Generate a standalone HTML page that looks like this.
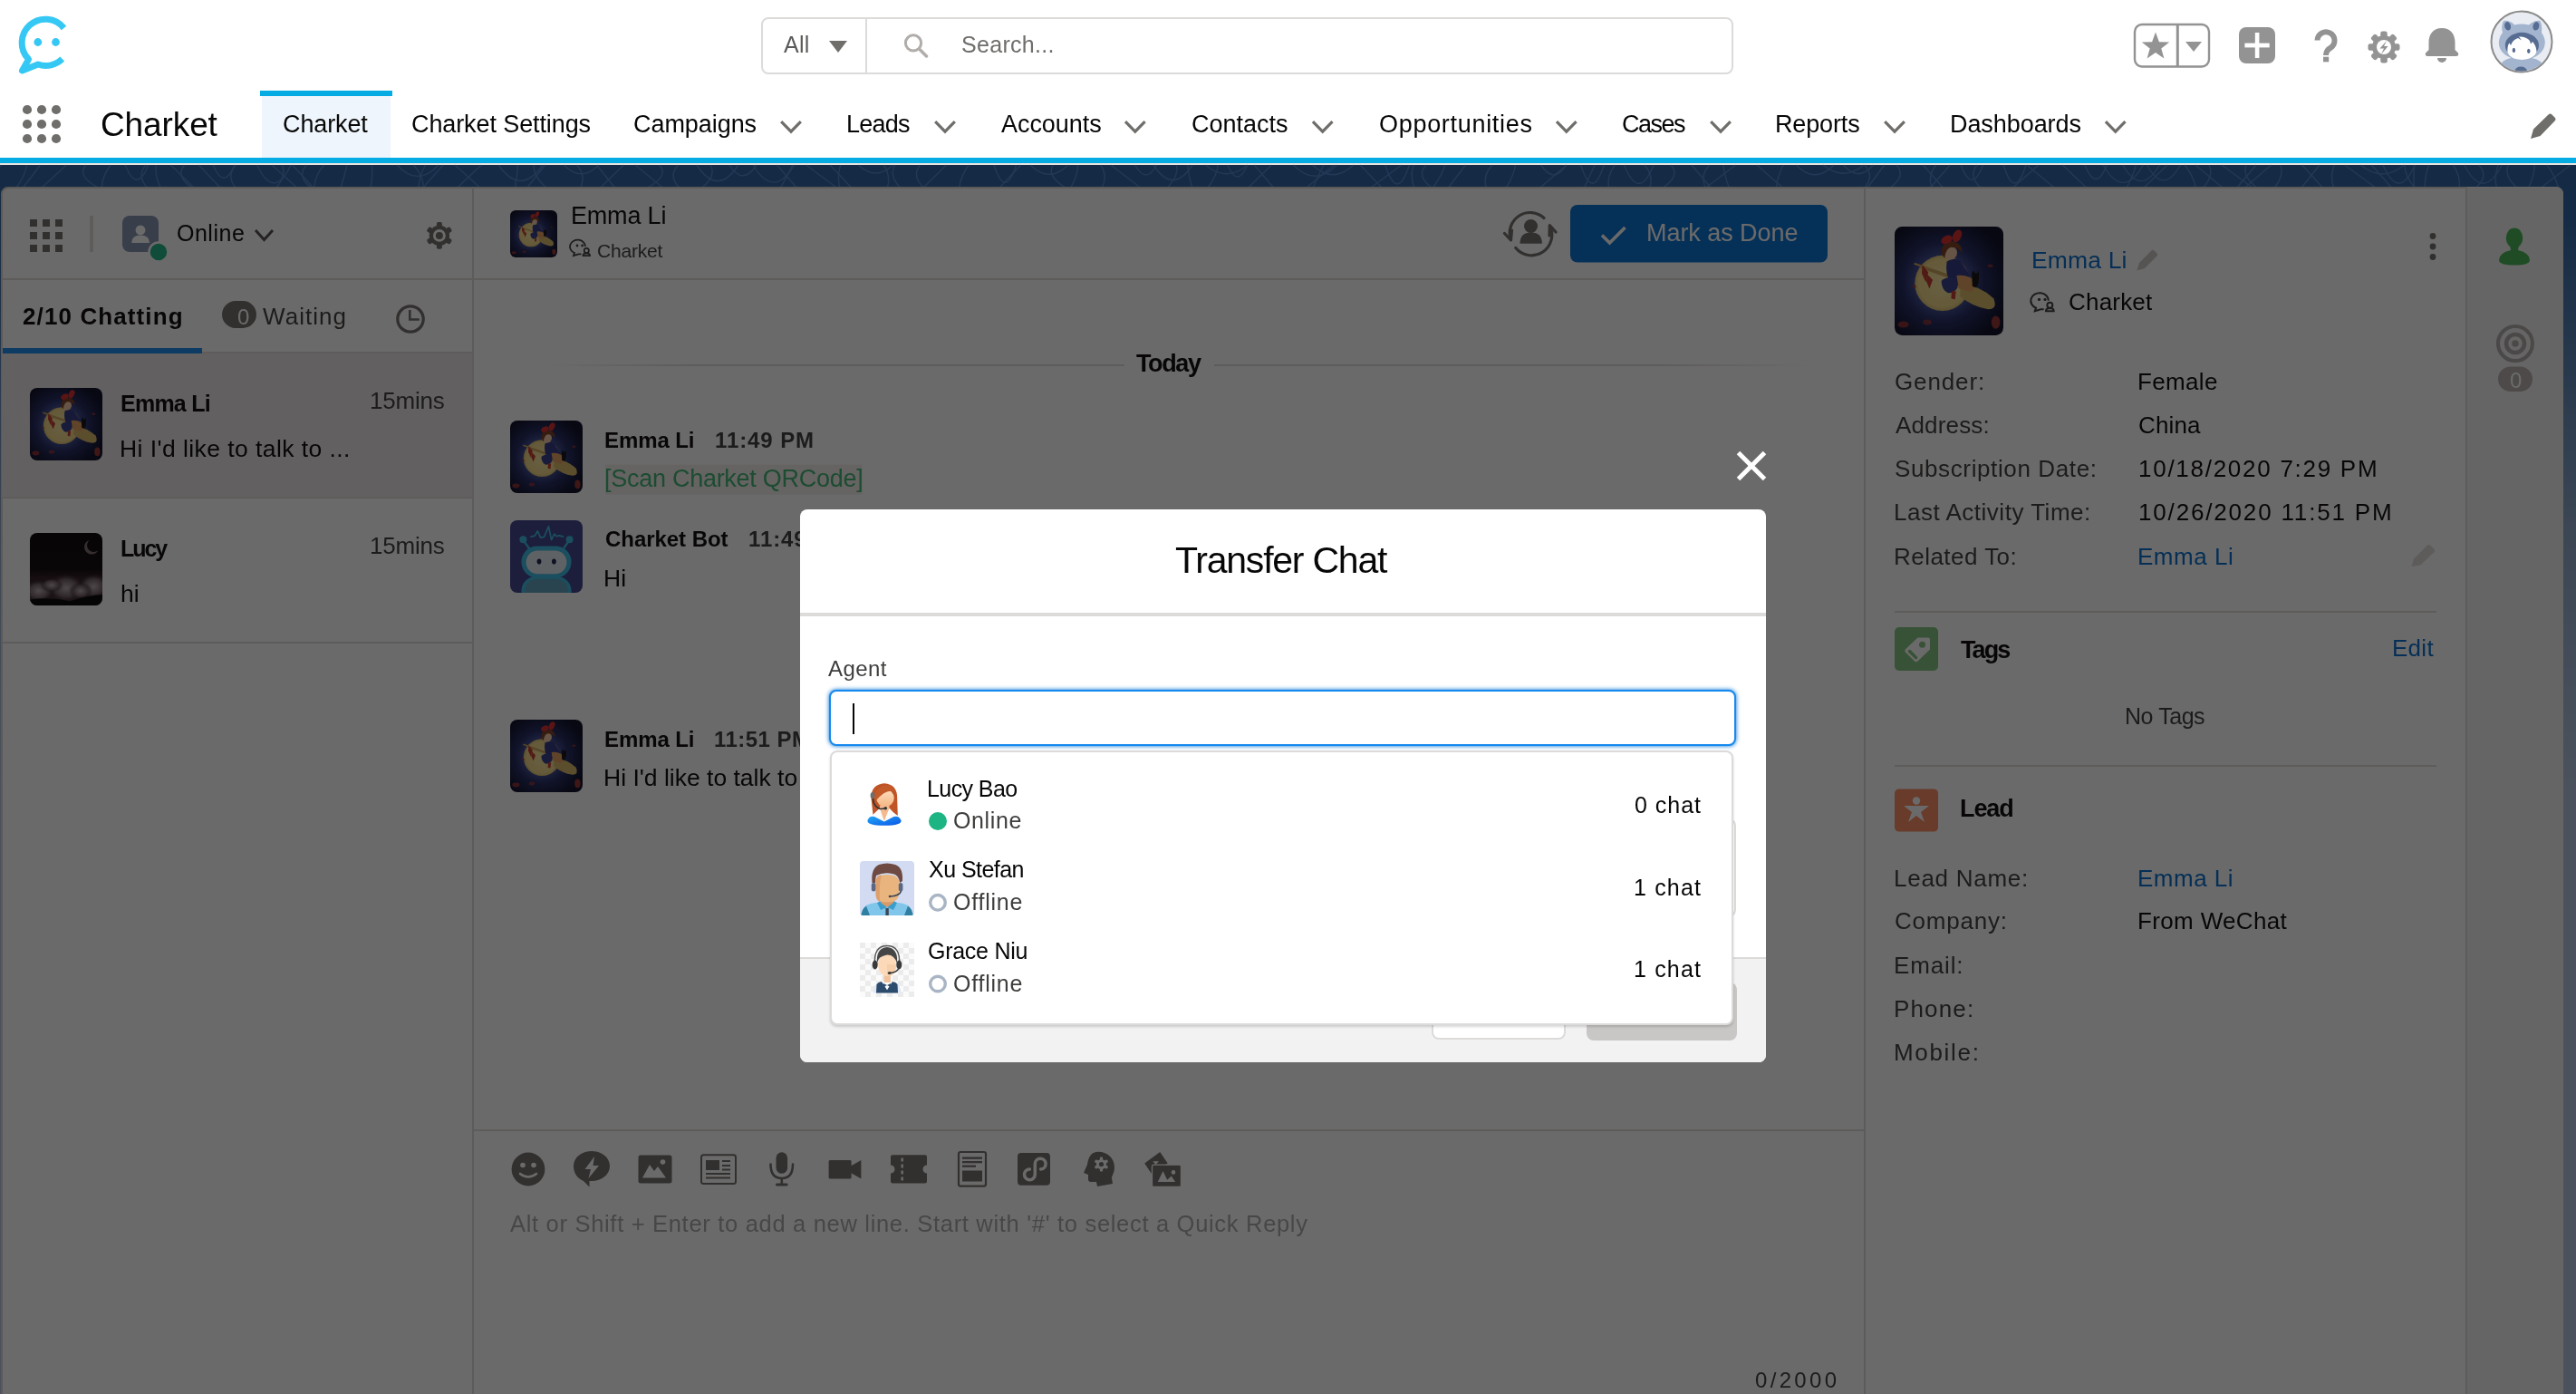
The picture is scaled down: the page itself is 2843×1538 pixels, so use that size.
<!DOCTYPE html>
<html><head><meta charset="utf-8"><title>Charket</title><style>
*{margin:0;padding:0;box-sizing:border-box}
html,body{width:2843px;height:1538px;overflow:hidden;background:#fff;font-family:"Liberation Sans",sans-serif}
.t{position:absolute;white-space:nowrap;line-height:1;will-change:transform}
.abs{position:absolute}
svg.full{position:absolute;left:0;top:0;width:2843px;height:1538px;overflow:visible}
</style></head>
<body>
<div class="abs" style="left:0;top:0;width:2843px;height:182px;background:#fff"></div>
<div class="abs" style="left:840px;top:18.5px;width:1073px;height:63px;border:2px solid #dddbda;border-radius:8px"></div>
<div class="abs" style="left:955px;top:19px;width:2px;height:62px;background:#dddbda"></div>
<div class="abs" style="left:287px;top:100px;width:146px;height:6px;background:#05ace3"></div>
<div class="abs" style="left:289px;top:106px;width:142px;height:68px;background:#eef5fc"></div>
<div class="abs" style="left:0;top:174px;width:2843px;height:6px;background:#05ace3"></div>
<div class="abs" style="left:0;top:180px;width:2843px;height:2px;background:#e8e4e0"></div>
<svg class="full" viewBox="0 0 2843 1538">
<path d="M70.5,31 A26,26 0 1,0 31.6,65.4 L24.5,78 L42,71 A26,26 0 0,0 68.7,65" fill="none" stroke="#35c8f5" stroke-width="7" stroke-linejoin="round"/>
<circle cx="41.8" cy="46.5" r="4.4" fill="#35c8f5"/><circle cx="61.5" cy="46.5" r="4.4" fill="#35c8f5"/>
<polygon points="915,45 935,45 925,58" fill="#706e6b"/>
<circle cx="1008" cy="47.4" r="8.6" fill="none" stroke="#b0adab" stroke-width="3"/>
<line x1="1014.5" y1="54" x2="1022.5" y2="62" stroke="#b0adab" stroke-width="3.5" stroke-linecap="round"/>
<rect x="2356" y="27" width="82" height="46.5" rx="8" fill="none" stroke="#939393" stroke-width="2.4"/>
<rect x="2401.8" y="27" width="3" height="46.5" fill="#939393"/>
<polygon points="2379.0,35.5 2382.9,46.2 2394.2,46.6 2385.3,53.5 2388.4,64.4 2379.0,58.1 2369.6,64.4 2372.7,53.5 2363.8,46.6 2375.1,46.2" fill="#939393"/>
<polygon points="2412,46 2430,46 2421,57" fill="#939393"/>
<rect x="2471" y="30" width="40" height="40" rx="8" fill="#939393"/>
<rect x="2477.4" y="47.6" width="27.3" height="4.8" fill="#fff"/><rect x="2488.8" y="36" width="4.6" height="28" fill="#fff"/>
<path d="M2557.5,44.5 A9.5,9.5 0 1,1 2572.5,52.5 Q2567,55.5 2567,61" fill="none" stroke="#939393" stroke-width="6"/>
<rect x="2564" y="62.7" width="6.2" height="5.6" fill="#939393"/>
<circle cx="2631" cy="52" r="13" fill="#939393"/><rect x="2627.2" y="34.5" width="7.5" height="6.5" rx="2.2" fill="#939393" transform="rotate(0.0 2631 52)"/><rect x="2627.2" y="34.5" width="7.5" height="6.5" rx="2.2" fill="#939393" transform="rotate(45.0 2631 52)"/><rect x="2627.2" y="34.5" width="7.5" height="6.5" rx="2.2" fill="#939393" transform="rotate(90.0 2631 52)"/><rect x="2627.2" y="34.5" width="7.5" height="6.5" rx="2.2" fill="#939393" transform="rotate(135.0 2631 52)"/><rect x="2627.2" y="34.5" width="7.5" height="6.5" rx="2.2" fill="#939393" transform="rotate(180.0 2631 52)"/><rect x="2627.2" y="34.5" width="7.5" height="6.5" rx="2.2" fill="#939393" transform="rotate(225.0 2631 52)"/><rect x="2627.2" y="34.5" width="7.5" height="6.5" rx="2.2" fill="#939393" transform="rotate(270.0 2631 52)"/><rect x="2627.2" y="34.5" width="7.5" height="6.5" rx="2.2" fill="#939393" transform="rotate(315.0 2631 52)"/><circle cx="2631" cy="52" r="8" fill="#fff"/>
<path d="M2634,45 L2626.5,53.5 L2631,53.5 L2628,60 L2635.5,51 L2631,51 Z" fill="#939393"/>
<path d="M2695,31 C2685,31 2680.5,38 2680.5,47 L2680.5,55 L2677,58.5 Q2676,62 2679.5,62 L2710.5,62 Q2714,62 2713,58.5 L2709.5,55 L2709.5,47 C2709.5,38 2705,31 2695,31 Z" fill="#939393"/>
<path d="M2690,64 A5,5 0 0,0 2700,64 Z" fill="#939393"/>
<circle cx="2783" cy="46" r="33.5" fill="#e9ecf2" stroke="#8c8c8c" stroke-width="2"/>
<clipPath id="avc"><circle cx="2783" cy="46" r="32.5"/></clipPath>
<g clip-path="url(#avc)">
<path d="M2762,68 Q2770,63 2776,64 L2790,64 Q2797,63 2804,68 L2812,84 L2754,84 Z" fill="#a3b4cf"/>
<path d="M2763,23 Q2770,22 2775,27.5 Q2783,25.5 2791,27.5 Q2797,22 2803.5,23 Q2806,28 2805,36 Q2809,42 2808.8,47 Q2808,63 2783.3,67 Q2758,63 2757.8,47 Q2758,41 2762,36 Q2760,28 2763,23 Z" fill="#a3b4cf"/>
<ellipse cx="2767.6" cy="28.8" rx="3.4" ry="4.8" fill="#566c91" transform="rotate(-15 2767.6 28.8)"/>
<ellipse cx="2798.9" cy="28.8" rx="3.4" ry="4.8" fill="#566c91" transform="rotate(15 2798.9 28.8)"/>
<ellipse cx="2783.4" cy="50" rx="18.6" ry="14.2" fill="#566c91"/>
<path d="M2767.5,58 Q2767,50 2769.5,47.5 L2771,50 Q2773,44 2779,42 L2783,44.5 L2780,40.5 Q2788,40 2792,45 L2793,48.5 L2795,46 Q2799,50 2799.5,57 Q2797,65 2783.3,66 Q2770,65 2767.5,58 Z" fill="#fff"/>
<ellipse cx="2774.4" cy="55.4" rx="1.7" ry="2.6" fill="#566c91"/><ellipse cx="2790.8" cy="56.3" rx="1.7" ry="2.6" fill="#566c91"/>
<ellipse cx="2782.2" cy="78.5" rx="6.8" ry="5" fill="#566c91"/>
</g>
<circle cx="30" cy="121" r="5.1" fill="#706e6b"/><circle cx="46" cy="121" r="5.1" fill="#706e6b"/><circle cx="62" cy="121" r="5.1" fill="#706e6b"/><circle cx="30" cy="137" r="5.1" fill="#706e6b"/><circle cx="46" cy="137" r="5.1" fill="#706e6b"/><circle cx="62" cy="137" r="5.1" fill="#706e6b"/><circle cx="30" cy="153" r="5.1" fill="#706e6b"/><circle cx="46" cy="153" r="5.1" fill="#706e6b"/><circle cx="62" cy="153" r="5.1" fill="#706e6b"/><polyline points="862.2,134.2 873,145.2 883.8,134.2" fill="none" stroke="#706e6b" stroke-width="3.2"/><polyline points="1032.2,134.2 1043,145.2 1053.8,134.2" fill="none" stroke="#706e6b" stroke-width="3.2"/><polyline points="1242.0,134.2 1252.8,145.2 1263.6,134.2" fill="none" stroke="#706e6b" stroke-width="3.2"/><polyline points="1448.9,134.2 1459.7,145.2 1470.5,134.2" fill="none" stroke="#706e6b" stroke-width="3.2"/><polyline points="1718.0,134.2 1728.8,145.2 1739.6,134.2" fill="none" stroke="#706e6b" stroke-width="3.2"/><polyline points="1888.2,134.2 1899,145.2 1909.8,134.2" fill="none" stroke="#706e6b" stroke-width="3.2"/><polyline points="2080.2,134.2 2091,145.2 2101.8,134.2" fill="none" stroke="#706e6b" stroke-width="3.2"/><polyline points="2323.8999999999996,134.2 2334.7,145.2 2345.5,134.2" fill="none" stroke="#706e6b" stroke-width="3.2"/><path d="M2793,153 L2796,142.5 L2812.5,126.5 Q2814.5,124.5 2816.5,126.5 L2819.5,129.5 Q2821.5,131.5 2819.5,133.5 L2803.5,150 Z" fill="#706e6b"/></svg>
<div class="t" style="left:865.0px;top:36.8px;font-size:25px;color:#5c5a58;letter-spacing:0.24px;">All</div><div class="t" style="left:1060.7px;top:36.8px;font-size:25px;color:#706e6b;letter-spacing:0.31px;">Search...</div><div class="t" style="left:111.0px;top:119.3px;font-size:37px;color:#080707;letter-spacing:-0.11px;">Charket</div><div class="t" style="left:312.4px;top:123.8px;font-size:27px;color:#080707;letter-spacing:-0.12px;">Charket</div><div class="t" style="left:454.0px;top:123.8px;font-size:27px;color:#080707;letter-spacing:-0.10px;">Charket Settings</div><div class="t" style="left:699.0px;top:123.8px;font-size:27px;color:#080707;letter-spacing:-0.06px;">Campaigns</div><div class="t" style="left:934.0px;top:123.8px;font-size:27px;color:#080707;letter-spacing:-0.77px;">Leads</div><div class="t" style="left:1104.8px;top:123.8px;font-size:27px;color:#080707;letter-spacing:-0.05px;">Accounts</div><div class="t" style="left:1315.0px;top:123.8px;font-size:27px;color:#080707;">Contacts</div><div class="t" style="left:1521.5px;top:123.8px;font-size:27px;color:#080707;letter-spacing:0.70px;">Opportunities</div><div class="t" style="left:1790.0px;top:123.8px;font-size:27px;color:#080707;letter-spacing:-1.51px;">Cases</div><div class="t" style="left:1958.8px;top:123.8px;font-size:27px;color:#080707;letter-spacing:-0.14px;">Reports</div><div class="t" style="left:2151.5px;top:123.8px;font-size:27px;color:#080707;letter-spacing:-0.07px;">Dashboards</div>

<div class="abs" style="left:0;top:182px;width:2843px;height:1356px;background:linear-gradient(#2760a4 0px,#2a63a3 60px,#8aa6c8 400px,#b0c4df 700px)"></div>
<svg class="full" viewBox="0 0 2843 1538"><g fill="none" stroke="#5b8fd6" stroke-width="1.4" opacity=".75"><path d="M-10.0,182 Q-6.4,194 -19.8,207"/><path d="M1.4,182 L-22.4,207"/><path d="M29.6,182 Q27.7,194 18.0,207"/><path d="M44.5,182 L25.5,207"/><path d="M73.4,182 L46.1,207"/><path d="M94.9,182 Q84.1,194 108.3,207"/><path d="M122.1,182 Q112.9,194 112.2,207"/><path d="M138.3,182 Q151.0,214.5 163.7,182"/><path d="M161.1,182 Q150.6,194 162.4,207"/><path d="M172.3,182 Q170.5,194 177.3,207"/><path d="M188.5,182 L213.8,207"/><path d="M203.5,182 Q193.5,194 211.3,207"/><path d="M219.5,182 L243.0,207"/><path d="M235.3,182 Q247.0,210.5 258.8,182"/><path d="M260.4,182 Q249.4,194 260.1,207"/><path d="M283.8,182 Q302.4,221.9 321.0,182"/><path d="M300.1,182 L327.6,207"/><path d="M311.4,182 Q316.2,194 305.0,207"/><path d="M322.7,182 L345.7,207"/><path d="M338.4,182 Q327.0,194 343.1,207"/><path d="M357.7,182 Q347.1,194 346.9,207"/><path d="M383.0,182 Q380.4,194 376.0,207"/><path d="M410.4,182 Q411.6,194 409.0,207"/><path d="M438.1,182 Q461.1,207.0 484.0,182"/><path d="M456.4,182 Q467.4,194 467.2,207"/><path d="M469.4,182 Q463.0,194 461.9,207"/><path d="M489.1,182 L466.9,207"/><path d="M502.1,182 L529.8,207"/><path d="M531.1,182 L504.9,207"/><path d="M550.2,182 Q574.5,217.0 598.8,182"/><path d="M571.4,182 Q571.0,194 568.5,207"/><path d="M589.4,182 Q588.0,194 603.0,207"/><path d="M601.6,182 L582.0,207"/><path d="M622.4,182 Q641.6,201.8 660.8,182"/><path d="M636.5,182 Q647.5,194 640.3,207"/><path d="M658.6,182 L678.4,207"/><path d="M688.4,182 L662.7,207"/><path d="M701.3,182 L731.2,207"/><path d="M727.9,182 Q738.7,194 714.5,207"/><path d="M748.5,182 Q737.1,194 749.7,207"/><path d="M769.0,182 Q792.0,217.4 814.9,182"/><path d="M784.2,182 Q790.8,194 774.9,207"/><path d="M804.9,182 Q819.8,205.6 834.8,182"/><path d="M831.1,182 Q853.9,220.2 876.7,182"/><path d="M857.5,182 L879.1,207"/><path d="M874.6,182 Q869.3,194 861.4,207"/><path d="M889.8,182 L923.1,207"/><path d="M916.0,182 L939.6,207"/><path d="M927.6,182 Q923.7,194 926.7,207"/><path d="M947.2,182 Q966.4,200.0 985.5,182"/><path d="M975.4,182 Q983.4,194 979.4,207"/><path d="M987.8,182 Q980.6,194 993.7,207"/><path d="M1015.6,182 Q1005.7,194 1019.4,207"/><path d="M1044.5,182 L1019.1,207"/><path d="M1069.0,182 Q1060.6,194 1058.6,207"/><path d="M1097.1,182 Q1109.3,220.7 1121.5,182"/><path d="M1126.7,182 L1103.1,207"/><path d="M1137.1,182 Q1158.0,202.6 1178.9,182"/><path d="M1162.1,182 Q1154.8,194 1175.8,207"/><path d="M1189.6,182 Q1189.6,194 1181.6,207"/><path d="M1214.9,182 Q1222.9,194 1216.1,207"/><path d="M1226.1,182 L1258.5,207"/><path d="M1252.6,182 Q1264.6,203.8 1276.6,182"/><path d="M1272.9,182 Q1294.5,215.2 1316.1,182"/><path d="M1298.4,182 Q1301.2,194 1288.3,207"/><path d="M1310.8,182 Q1311.5,194 1315.9,207"/><path d="M1330.4,182 Q1353.7,201.4 1376.9,182"/><path d="M1344.3,182 Q1343.1,194 1333.0,207"/><path d="M1354.8,182 Q1365.8,208.1 1376.7,182"/><path d="M1384.3,182 L1405.5,207"/><path d="M1403.3,182 L1377.7,207"/><path d="M1427.3,182 Q1451.4,206.5 1475.6,182"/><path d="M1448.5,182 Q1471.1,203.4 1493.7,182"/><path d="M1460.9,182 Q1454.7,194 1449.0,207"/><path d="M1472.4,182 L1441.9,207"/><path d="M1501.2,182 L1525.0,207"/><path d="M1528.8,182 Q1542.1,223.8 1555.4,182"/><path d="M1546.8,182 L1513.0,207"/><path d="M1560.0,182 Q1556.2,194 1560.5,207"/><path d="M1574.0,182 Q1562.4,194 1580.2,207"/><path d="M1595.0,182 Q1591.0,194 1581.5,207"/><path d="M1617.5,182 L1598.5,207"/><path d="M1646.9,182 Q1635.9,194 1640.4,207"/><path d="M1672.5,182 Q1670.7,194 1662.2,207"/><path d="M1700.8,182 Q1714.6,203.7 1728.5,182"/><path d="M1729.1,182 L1699.9,207"/><path d="M1744.7,182 Q1757.5,222.4 1770.2,182"/><path d="M1760.1,182 Q1754.4,194 1748.6,207"/><path d="M1782.3,182 Q1773.2,194 1775.7,207"/><path d="M1792.5,182 Q1808.8,222.9 1825.0,182"/><path d="M1814.9,182 Q1825.4,194 1820.8,207"/><path d="M1844.3,182 Q1854.7,194 1835.4,207"/><path d="M1866.9,182 L1888.2,207"/><path d="M1886.9,182 Q1875.3,194 1882.6,207"/><path d="M1901.9,182 Q1903.1,194 1908.4,207"/><path d="M1915.7,182 L1882.7,207"/><path d="M1938.9,182 L1967.4,207"/><path d="M1968.3,182 Q1961.8,194 1960.3,207"/><path d="M1982.2,182 Q2003.2,203.5 2024.1,182"/><path d="M2012.0,182 Q2034.6,200.4 2057.1,182"/><path d="M2034.5,182 Q2051.0,201.4 2067.4,182"/><path d="M2057.8,182 Q2069.1,194 2058.0,207"/><path d="M2079.8,182 L2061.1,207"/><path d="M2093.0,182 Q2104.0,194 2086.3,207"/><path d="M2122.4,182 L2144.3,207"/><path d="M2136.8,182 Q2126.8,194 2132.2,207"/><path d="M2152.3,182 L2130.4,207"/><path d="M2164.2,182 Q2176.3,214.7 2188.5,182"/><path d="M2182.0,182 Q2172.1,194 2185.7,207"/><path d="M2211.2,182 Q2223.5,222.3 2235.9,182"/><path d="M2236.9,182 L2267.1,207"/><path d="M2249.9,182 L2221.6,207"/><path d="M2276.4,182 L2302.6,207"/><path d="M2301.0,182 Q2313.1,213.1 2325.2,182"/><path d="M2321.1,182 Q2343.2,220.7 2365.3,182"/><path d="M2342.8,182 Q2363.1,217.3 2383.3,182"/><path d="M2357.4,182 Q2354.1,194 2347.1,207"/><path d="M2369.5,182 Q2387.9,215.7 2406.3,182"/><path d="M2392.0,182 L2366.2,207"/><path d="M2411.2,182 Q2420.7,194 2423.3,207"/><path d="M2423.0,182 L2452.9,207"/><path d="M2438.1,182 Q2443.6,194 2431.5,207"/><path d="M2452.2,182 L2485.8,207"/><path d="M2479.1,182 Q2474.0,194 2490.6,207"/><path d="M2490.0,182 L2468.8,207"/><path d="M2506.6,182 L2477.6,207"/><path d="M2516.9,182 Q2521.0,194 2510.4,207"/><path d="M2540.7,182 L2563.4,207"/><path d="M2560.0,182 L2540.1,207"/><path d="M2576.3,182 Q2571.2,194 2575.5,207"/><path d="M2587.8,182 L2621.7,207"/><path d="M2605.5,182 Q2629.5,201.9 2653.4,182"/><path d="M2617.3,182 L2639.5,207"/><path d="M2630.0,182 Q2647.6,222.2 2665.2,182"/><path d="M2654.0,182 Q2653.7,194 2665.2,207"/><path d="M2664.5,182 Q2663.4,194 2664.3,207"/><path d="M2680.6,182 Q2676.2,194 2676.2,207"/><path d="M2707.4,182 Q2715.5,194 2714.4,207"/><path d="M2719.8,182 Q2740.5,222.5 2761.2,182"/><path d="M2735.6,182 Q2747.6,194 2732.6,207"/><path d="M2757.4,182 Q2752.0,194 2755.4,207"/><path d="M2768.3,182 Q2763.2,194 2777.7,207"/><path d="M2797.0,182 Q2797.3,194 2790.5,207"/><path d="M2810.8,182 Q2820.1,194 2823.6,207"/><path d="M2837.1,182 L2804.5,207"/></g></svg>

<div class="abs" style="left:1px;top:206px;width:2828px;height:1340px;background:#fff;border-radius:8px 8px 0 0;border:2px solid #d9d6d3"></div>
<div class="abs" style="left:2px;top:390px;width:519px;height:158px;background:#e8e7e7"></div>
<div class="abs" style="left:2723px;top:206px;width:106px;height:1340px;background:#f3f2f2;border-radius:0 8px 0 0"></div>
<div class="abs" style="left:2px;top:307px;width:2056px;height:2px;background:#dddbda"></div>
<div class="abs" style="left:2px;top:388px;width:519px;height:2px;background:#dddbda"></div>
<div class="abs" style="left:2px;top:548px;width:519px;height:2px;background:#dddbda"></div>
<div class="abs" style="left:2px;top:708px;width:519px;height:2px;background:#dddbda"></div>
<div class="abs" style="left:521px;top:207px;width:2px;height:1331px;background:#dddbda"></div>
<div class="abs" style="left:2057px;top:207px;width:2px;height:1331px;background:#dddbda"></div>
<svg style="position:absolute;left:33px;top:428px" width="80" height="80" viewBox="0 0 100 100">
<defs><radialGradient id="ga1" cx="44%" cy="51%" r="60%"><stop offset="0.3" stop-color="#4a5aa8"/><stop offset="0.6" stop-color="#1e2860"/><stop offset="1" stop-color="#080c26"/></radialGradient>
<radialGradient id="ma1" cx="50%" cy="50%" r="50%"><stop offset="0" stop-color="#f7e6a0"/><stop offset="0.85" stop-color="#efd786"/><stop offset="1" stop-color="#d9c070"/></radialGradient>
<clipPath id="ca1"><rect width="100" height="100" rx="10"/></clipPath></defs>
<g clip-path="url(#ca1)">
<rect width="100" height="100" fill="url(#ga1)"/>
<circle cx="44" cy="52" r="25.5" fill="url(#ma1)"/>
<line x1="23" y1="37" x2="60" y2="50" stroke="#c9a35a" stroke-width="1.8"/>
<path d="M30,44 L35,49 L32,57 L29,50 Z" fill="#c0392b"/>
<path d="M61,53 Q78,54 91,66 Q95,76 86,76 Q72,74 60,64 Z" fill="#d8b868"/>
<line x1="18" y1="34" x2="56" y2="47" stroke="#c9a35a" stroke-width="1.8"/>
<path d="M25.5,35 L31,42 L28.5,51 L25,43 Z" fill="#c0392b"/>
<path d="M48,32 Q54,28 60,31 L69,44 Q70,54 62,56 L52,52 Q46,44 48,32 Z" fill="#2f3685"/>
<path d="M43,50 Q48,45 56,48 L58,56 Q55,61 49,61 Q43,58 43,50 Z" fill="#343a8a"/>
<path d="M52.5,59 L56.5,59.5 L55.5,67 L52,66 Z" fill="#c0392b"/>
<path d="M57,45 Q66,44 73,49 Q76,57 70,60 L59,57 Z" fill="#e3a060"/>
<path d="M71,43 L72.5,40.5 L74,43 L76,43 L77.3,40.5 L77.5,45 Q78,53 75,56 L71.5,55 Z" fill="#101010"/>
<circle cx="51" cy="24" r="6.5" fill="#f2c8a8"/>
<path d="M43,25 Q43,14 52,13.5 Q62,14 62,24 Q58,19 52,19 Q47,20 46,29 Z" fill="#7a3a20"/>
<ellipse cx="48" cy="12" rx="5.5" ry="3.6" fill="#d42a2a" transform="rotate(-25 48 12)"/><ellipse cx="57.5" cy="8.5" rx="3.8" ry="6" fill="#d42a2a" transform="rotate(25 57.5 8.5)"/>
<ellipse cx="8" cy="90" rx="5" ry="3" fill="#a03030" opacity=".8"/><ellipse cx="93" cy="88" rx="4" ry="6" fill="#b03a30" opacity=".8"/>
<ellipse cx="30" cy="88" rx="4" ry="2.5" fill="#a03030" opacity=".7"/><ellipse cx="88" cy="36" rx="2.5" ry="1.5" fill="#a03030" opacity=".7"/>
<ellipse cx="18" cy="55" rx="2" ry="1.5" fill="#a03030" opacity=".7"/>
</g></svg><svg style="position:absolute;left:33px;top:588px" width="80" height="80" viewBox="0 0 100 100">
<defs><clipPath id="ca2"><rect width="100" height="100" rx="10"/></clipPath>
<radialGradient id="ga2" cx="50%" cy="50%" r="50%"><stop offset="0" stop-color="#b8a8ae"/><stop offset="0.6" stop-color="#6a5a62"/><stop offset="1" stop-color="#2a1a22" stop-opacity="0"/></radialGradient>
<linearGradient id="ha2" x1="0" y1="0" x2="0" y2="1"><stop offset="0" stop-color="#050304"/><stop offset="0.5" stop-color="#0a0608"/><stop offset="0.62" stop-color="#2a1820"/><stop offset="1" stop-color="#3a2a30"/></linearGradient></defs>
<g clip-path="url(#ca2)">
<rect width="100" height="100" fill="url(#ha2)"/>
<ellipse cx="50" cy="76" rx="26" ry="20" fill="url(#ga2)"/>
<ellipse cx="12" cy="80" rx="22" ry="16" fill="url(#ga2)"/>
<ellipse cx="88" cy="74" rx="22" ry="18" fill="url(#ga2)"/>
<ellipse cx="30" cy="72" rx="16" ry="10" fill="url(#ga2)"/>
<ellipse cx="70" cy="80" rx="16" ry="12" fill="url(#ga2)"/>
<path d="M0,92 Q30,88 55,94 Q80,86 100,85 L100,100 L0,100 Z" fill="#040303"/>
<path d="M82,10 A10,10 0 1,0 94,24 A8,8 0 0,1 82,10 Z" fill="#7a6a6a"/>
</g></svg><svg style="position:absolute;left:563px;top:232px" width="52" height="52" viewBox="0 0 100 100">
<defs><radialGradient id="ga3" cx="44%" cy="51%" r="60%"><stop offset="0.3" stop-color="#4a5aa8"/><stop offset="0.6" stop-color="#1e2860"/><stop offset="1" stop-color="#080c26"/></radialGradient>
<radialGradient id="ma3" cx="50%" cy="50%" r="50%"><stop offset="0" stop-color="#f7e6a0"/><stop offset="0.85" stop-color="#efd786"/><stop offset="1" stop-color="#d9c070"/></radialGradient>
<clipPath id="ca3"><rect width="100" height="100" rx="12"/></clipPath></defs>
<g clip-path="url(#ca3)">
<rect width="100" height="100" fill="url(#ga3)"/>
<circle cx="44" cy="52" r="25.5" fill="url(#ma3)"/>
<line x1="23" y1="37" x2="60" y2="50" stroke="#c9a35a" stroke-width="1.8"/>
<path d="M30,44 L35,49 L32,57 L29,50 Z" fill="#c0392b"/>
<path d="M61,53 Q78,54 91,66 Q95,76 86,76 Q72,74 60,64 Z" fill="#d8b868"/>
<line x1="18" y1="34" x2="56" y2="47" stroke="#c9a35a" stroke-width="1.8"/>
<path d="M25.5,35 L31,42 L28.5,51 L25,43 Z" fill="#c0392b"/>
<path d="M48,32 Q54,28 60,31 L69,44 Q70,54 62,56 L52,52 Q46,44 48,32 Z" fill="#2f3685"/>
<path d="M43,50 Q48,45 56,48 L58,56 Q55,61 49,61 Q43,58 43,50 Z" fill="#343a8a"/>
<path d="M52.5,59 L56.5,59.5 L55.5,67 L52,66 Z" fill="#c0392b"/>
<path d="M57,45 Q66,44 73,49 Q76,57 70,60 L59,57 Z" fill="#e3a060"/>
<path d="M71,43 L72.5,40.5 L74,43 L76,43 L77.3,40.5 L77.5,45 Q78,53 75,56 L71.5,55 Z" fill="#101010"/>
<circle cx="51" cy="24" r="6.5" fill="#f2c8a8"/>
<path d="M43,25 Q43,14 52,13.5 Q62,14 62,24 Q58,19 52,19 Q47,20 46,29 Z" fill="#7a3a20"/>
<ellipse cx="48" cy="12" rx="5.5" ry="3.6" fill="#d42a2a" transform="rotate(-25 48 12)"/><ellipse cx="57.5" cy="8.5" rx="3.8" ry="6" fill="#d42a2a" transform="rotate(25 57.5 8.5)"/>
<ellipse cx="8" cy="90" rx="5" ry="3" fill="#a03030" opacity=".8"/><ellipse cx="93" cy="88" rx="4" ry="6" fill="#b03a30" opacity=".8"/>
<ellipse cx="30" cy="88" rx="4" ry="2.5" fill="#a03030" opacity=".7"/><ellipse cx="88" cy="36" rx="2.5" ry="1.5" fill="#a03030" opacity=".7"/>
<ellipse cx="18" cy="55" rx="2" ry="1.5" fill="#a03030" opacity=".7"/>
</g></svg><svg style="position:absolute;left:563px;top:464px" width="80" height="80" viewBox="0 0 100 100">
<defs><radialGradient id="ga4" cx="44%" cy="51%" r="60%"><stop offset="0.3" stop-color="#4a5aa8"/><stop offset="0.6" stop-color="#1e2860"/><stop offset="1" stop-color="#080c26"/></radialGradient>
<radialGradient id="ma4" cx="50%" cy="50%" r="50%"><stop offset="0" stop-color="#f7e6a0"/><stop offset="0.85" stop-color="#efd786"/><stop offset="1" stop-color="#d9c070"/></radialGradient>
<clipPath id="ca4"><rect width="100" height="100" rx="10"/></clipPath></defs>
<g clip-path="url(#ca4)">
<rect width="100" height="100" fill="url(#ga4)"/>
<circle cx="44" cy="52" r="25.5" fill="url(#ma4)"/>
<line x1="23" y1="37" x2="60" y2="50" stroke="#c9a35a" stroke-width="1.8"/>
<path d="M30,44 L35,49 L32,57 L29,50 Z" fill="#c0392b"/>
<path d="M61,53 Q78,54 91,66 Q95,76 86,76 Q72,74 60,64 Z" fill="#d8b868"/>
<line x1="18" y1="34" x2="56" y2="47" stroke="#c9a35a" stroke-width="1.8"/>
<path d="M25.5,35 L31,42 L28.5,51 L25,43 Z" fill="#c0392b"/>
<path d="M48,32 Q54,28 60,31 L69,44 Q70,54 62,56 L52,52 Q46,44 48,32 Z" fill="#2f3685"/>
<path d="M43,50 Q48,45 56,48 L58,56 Q55,61 49,61 Q43,58 43,50 Z" fill="#343a8a"/>
<path d="M52.5,59 L56.5,59.5 L55.5,67 L52,66 Z" fill="#c0392b"/>
<path d="M57,45 Q66,44 73,49 Q76,57 70,60 L59,57 Z" fill="#e3a060"/>
<path d="M71,43 L72.5,40.5 L74,43 L76,43 L77.3,40.5 L77.5,45 Q78,53 75,56 L71.5,55 Z" fill="#101010"/>
<circle cx="51" cy="24" r="6.5" fill="#f2c8a8"/>
<path d="M43,25 Q43,14 52,13.5 Q62,14 62,24 Q58,19 52,19 Q47,20 46,29 Z" fill="#7a3a20"/>
<ellipse cx="48" cy="12" rx="5.5" ry="3.6" fill="#d42a2a" transform="rotate(-25 48 12)"/><ellipse cx="57.5" cy="8.5" rx="3.8" ry="6" fill="#d42a2a" transform="rotate(25 57.5 8.5)"/>
<ellipse cx="8" cy="90" rx="5" ry="3" fill="#a03030" opacity=".8"/><ellipse cx="93" cy="88" rx="4" ry="6" fill="#b03a30" opacity=".8"/>
<ellipse cx="30" cy="88" rx="4" ry="2.5" fill="#a03030" opacity=".7"/><ellipse cx="88" cy="36" rx="2.5" ry="1.5" fill="#a03030" opacity=".7"/>
<ellipse cx="18" cy="55" rx="2" ry="1.5" fill="#a03030" opacity=".7"/>
</g></svg><svg style="position:absolute;left:563px;top:574px" width="80" height="80" viewBox="0 0 100 100">
<defs><clipPath id="ca5"><rect width="100" height="100" rx="10"/></clipPath></defs>
<g clip-path="url(#ca5)">
<rect width="100" height="100" fill="#3a428c"/>
<polyline points="28,23 34,21.5 38,15 42,24 47,23 53,8.5 57,27 61,19 64,22 68,21 74,23" fill="none" stroke="#37b8e0" stroke-width="2.2" stroke-linejoin="round"/>
<line x1="18" y1="27" x2="27" y2="40" stroke="#37b8e0" stroke-width="3"/><circle cx="18" cy="26.5" r="5" fill="#37b8e0"/>
<line x1="82" y1="27" x2="73" y2="40" stroke="#37b8e0" stroke-width="3"/><circle cx="82" cy="26.5" r="5" fill="#37b8e0"/>
<rect x="15.5" y="77" width="69" height="40" rx="22" fill="#37b8e0"/>
<rect x="20.5" y="81" width="59" height="30" rx="17" fill="#5aa0b8"/>
<rect x="15.5" y="35.5" width="69" height="44" rx="22" fill="#37b8e0"/>
<rect x="22" y="42" width="56" height="32" rx="16" fill="#e2ecf2"/>
<ellipse cx="40" cy="57" rx="3" ry="3.8" fill="#1b1f4d"/><ellipse cx="60.5" cy="57" rx="3" ry="3.8" fill="#1b1f4d"/>
</g></svg><svg style="position:absolute;left:563px;top:794px" width="80" height="80" viewBox="0 0 100 100">
<defs><radialGradient id="ga6" cx="44%" cy="51%" r="60%"><stop offset="0.3" stop-color="#4a5aa8"/><stop offset="0.6" stop-color="#1e2860"/><stop offset="1" stop-color="#080c26"/></radialGradient>
<radialGradient id="ma6" cx="50%" cy="50%" r="50%"><stop offset="0" stop-color="#f7e6a0"/><stop offset="0.85" stop-color="#efd786"/><stop offset="1" stop-color="#d9c070"/></radialGradient>
<clipPath id="ca6"><rect width="100" height="100" rx="10"/></clipPath></defs>
<g clip-path="url(#ca6)">
<rect width="100" height="100" fill="url(#ga6)"/>
<circle cx="44" cy="52" r="25.5" fill="url(#ma6)"/>
<line x1="23" y1="37" x2="60" y2="50" stroke="#c9a35a" stroke-width="1.8"/>
<path d="M30,44 L35,49 L32,57 L29,50 Z" fill="#c0392b"/>
<path d="M61,53 Q78,54 91,66 Q95,76 86,76 Q72,74 60,64 Z" fill="#d8b868"/>
<line x1="18" y1="34" x2="56" y2="47" stroke="#c9a35a" stroke-width="1.8"/>
<path d="M25.5,35 L31,42 L28.5,51 L25,43 Z" fill="#c0392b"/>
<path d="M48,32 Q54,28 60,31 L69,44 Q70,54 62,56 L52,52 Q46,44 48,32 Z" fill="#2f3685"/>
<path d="M43,50 Q48,45 56,48 L58,56 Q55,61 49,61 Q43,58 43,50 Z" fill="#343a8a"/>
<path d="M52.5,59 L56.5,59.5 L55.5,67 L52,66 Z" fill="#c0392b"/>
<path d="M57,45 Q66,44 73,49 Q76,57 70,60 L59,57 Z" fill="#e3a060"/>
<path d="M71,43 L72.5,40.5 L74,43 L76,43 L77.3,40.5 L77.5,45 Q78,53 75,56 L71.5,55 Z" fill="#101010"/>
<circle cx="51" cy="24" r="6.5" fill="#f2c8a8"/>
<path d="M43,25 Q43,14 52,13.5 Q62,14 62,24 Q58,19 52,19 Q47,20 46,29 Z" fill="#7a3a20"/>
<ellipse cx="48" cy="12" rx="5.5" ry="3.6" fill="#d42a2a" transform="rotate(-25 48 12)"/><ellipse cx="57.5" cy="8.5" rx="3.8" ry="6" fill="#d42a2a" transform="rotate(25 57.5 8.5)"/>
<ellipse cx="8" cy="90" rx="5" ry="3" fill="#a03030" opacity=".8"/><ellipse cx="93" cy="88" rx="4" ry="6" fill="#b03a30" opacity=".8"/>
<ellipse cx="30" cy="88" rx="4" ry="2.5" fill="#a03030" opacity=".7"/><ellipse cx="88" cy="36" rx="2.5" ry="1.5" fill="#a03030" opacity=".7"/>
<ellipse cx="18" cy="55" rx="2" ry="1.5" fill="#a03030" opacity=".7"/>
</g></svg><svg style="position:absolute;left:2091px;top:250px" width="120" height="120" viewBox="0 0 100 100">
<defs><radialGradient id="ga7" cx="44%" cy="51%" r="60%"><stop offset="0.3" stop-color="#4a5aa8"/><stop offset="0.6" stop-color="#1e2860"/><stop offset="1" stop-color="#080c26"/></radialGradient>
<radialGradient id="ma7" cx="50%" cy="50%" r="50%"><stop offset="0" stop-color="#f7e6a0"/><stop offset="0.85" stop-color="#efd786"/><stop offset="1" stop-color="#d9c070"/></radialGradient>
<clipPath id="ca7"><rect width="100" height="100" rx="7"/></clipPath></defs>
<g clip-path="url(#ca7)">
<rect width="100" height="100" fill="url(#ga7)"/>
<circle cx="44" cy="52" r="25.5" fill="url(#ma7)"/>
<line x1="23" y1="37" x2="60" y2="50" stroke="#c9a35a" stroke-width="1.8"/>
<path d="M30,44 L35,49 L32,57 L29,50 Z" fill="#c0392b"/>
<path d="M61,53 Q78,54 91,66 Q95,76 86,76 Q72,74 60,64 Z" fill="#d8b868"/>
<line x1="18" y1="34" x2="56" y2="47" stroke="#c9a35a" stroke-width="1.8"/>
<path d="M25.5,35 L31,42 L28.5,51 L25,43 Z" fill="#c0392b"/>
<path d="M48,32 Q54,28 60,31 L69,44 Q70,54 62,56 L52,52 Q46,44 48,32 Z" fill="#2f3685"/>
<path d="M43,50 Q48,45 56,48 L58,56 Q55,61 49,61 Q43,58 43,50 Z" fill="#343a8a"/>
<path d="M52.5,59 L56.5,59.5 L55.5,67 L52,66 Z" fill="#c0392b"/>
<path d="M57,45 Q66,44 73,49 Q76,57 70,60 L59,57 Z" fill="#e3a060"/>
<path d="M71,43 L72.5,40.5 L74,43 L76,43 L77.3,40.5 L77.5,45 Q78,53 75,56 L71.5,55 Z" fill="#101010"/>
<circle cx="51" cy="24" r="6.5" fill="#f2c8a8"/>
<path d="M43,25 Q43,14 52,13.5 Q62,14 62,24 Q58,19 52,19 Q47,20 46,29 Z" fill="#7a3a20"/>
<ellipse cx="48" cy="12" rx="5.5" ry="3.6" fill="#d42a2a" transform="rotate(-25 48 12)"/><ellipse cx="57.5" cy="8.5" rx="3.8" ry="6" fill="#d42a2a" transform="rotate(25 57.5 8.5)"/>
<ellipse cx="8" cy="90" rx="5" ry="3" fill="#a03030" opacity=".8"/><ellipse cx="93" cy="88" rx="4" ry="6" fill="#b03a30" opacity=".8"/>
<ellipse cx="30" cy="88" rx="4" ry="2.5" fill="#a03030" opacity=".7"/><ellipse cx="88" cy="36" rx="2.5" ry="1.5" fill="#a03030" opacity=".7"/>
<ellipse cx="18" cy="55" rx="2" ry="1.5" fill="#a03030" opacity=".7"/>
</g></svg>
<svg class="full" viewBox="0 0 2843 1538"><rect x="33" y="242" width="8" height="8" fill="#706e6b"/><rect x="47" y="242" width="8" height="8" fill="#706e6b"/><rect x="61" y="242" width="8" height="8" fill="#706e6b"/><rect x="33" y="256" width="8" height="8" fill="#706e6b"/><rect x="47" y="256" width="8" height="8" fill="#706e6b"/><rect x="61" y="256" width="8" height="8" fill="#706e6b"/><rect x="33" y="270" width="8" height="8" fill="#706e6b"/><rect x="47" y="270" width="8" height="8" fill="#706e6b"/><rect x="61" y="270" width="8" height="8" fill="#706e6b"/>
<rect x="99" y="238" width="4" height="40" fill="#dddbda"/>
<rect x="135" y="238" width="40" height="40" rx="8" fill="#8094ae"/>
<circle cx="155" cy="253.9" r="5.4" fill="#fff"/>
<path d="M145.2,268 Q145.2,259.4 155,259.4 Q165,259.4 165,268 Z" fill="#fff"/>
<circle cx="175" cy="278" r="10.5" fill="#1bb486" stroke="#fff" stroke-width="2.5"/>
<polyline points="282,254 291.5,264.5 301,254" fill="none" stroke="#514f4d" stroke-width="3"/>
<circle cx="484.9" cy="259.9" r="11.2" fill="#706e6b"/><rect x="481.9" y="245.1" width="6.0" height="5.6" rx="1.8" fill="#706e6b" transform="rotate(0.0 484.9 259.9)"/><rect x="481.9" y="245.1" width="6.0" height="5.6" rx="1.8" fill="#706e6b" transform="rotate(60.0 484.9 259.9)"/><rect x="481.9" y="245.1" width="6.0" height="5.6" rx="1.8" fill="#706e6b" transform="rotate(120.0 484.9 259.9)"/><rect x="481.9" y="245.1" width="6.0" height="5.6" rx="1.8" fill="#706e6b" transform="rotate(180.0 484.9 259.9)"/><rect x="481.9" y="245.1" width="6.0" height="5.6" rx="1.8" fill="#706e6b" transform="rotate(240.0 484.9 259.9)"/><rect x="481.9" y="245.1" width="6.0" height="5.6" rx="1.8" fill="#706e6b" transform="rotate(300.0 484.9 259.9)"/><circle cx="484.9" cy="259.9" r="6.9" fill="#fff"/><circle cx="484.9" cy="259.9" r="4" fill="#706e6b"/>
<rect x="245" y="332" width="38" height="30" rx="15" fill="#706e6b"/>
<circle cx="453" cy="352" r="14.2" fill="none" stroke="#706e6b" stroke-width="3.3"/>
<polyline points="452.3,342 452.3,352.5 462.8,352.5" fill="none" stroke="#706e6b" stroke-width="2.6"/>
<rect x="3" y="384" width="220" height="6" fill="#1589ee"/>
<g transform="translate(630.5,264.5) scale(1.0)">
<path d="M15.5,7.5 A8.5,7.5 0 1,0 3.5,14.5 L2.5,17.5 L8,15.8 L11,15.8" fill="none" stroke="#3e3e3c" stroke-width="1.8"/>
<circle cx="6.5" cy="6.5" r="1.4" fill="#3e3e3c"/><circle cx="12.2" cy="6.5" r="1.4" fill="#3e3e3c"/>
<circle cx="16.8" cy="12" r="2.6" fill="none" stroke="#3e3e3c" stroke-width="1.7"/>
<path d="M13,17.6 Q13,14.8 16.8,14.8 Q20.6,14.8 20.6,17.6 Z" fill="none" stroke="#3e3e3c" stroke-width="1.7"/>
</g>
<path d="M1704,240.5 A22.5,22.5 0 0,0 1667.5,264.5" fill="none" stroke="#706e6b" stroke-width="3.2" stroke-linecap="round"/>
<polyline points="1660.5,257.5 1667.5,264.8 1668.5,254" fill="none" stroke="#706e6b" stroke-width="3.2" stroke-linecap="round" stroke-linejoin="round"/>
<path d="M1672.8,273.5 A22.5,22.5 0 0,0 1710.5,249.5" fill="none" stroke="#706e6b" stroke-width="3.2" stroke-linecap="round"/>
<polyline points="1710,260 1710.3,248.5 1717,256" fill="none" stroke="#706e6b" stroke-width="3.2" stroke-linecap="round" stroke-linejoin="round"/>
<circle cx="1689.5" cy="249.5" r="7.5" fill="#706e6b"/>
<path d="M1677.5,268.8 Q1677.5,256.5 1689.7,256.5 Q1701.9,256.5 1701.9,268.8 Z" fill="#706e6b"/>
<rect x="1733" y="226" width="284" height="63.5" rx="8" fill="#0070d2"/>
<polyline points="1768,259.5 1776.5,268 1793.5,251" fill="none" stroke="#fff" stroke-width="3.6"/>
<defs><linearGradient id="tdl" x1="0" x2="1"><stop offset="0" stop-color="#dddbda" stop-opacity="0"/><stop offset="0.25" stop-color="#dddbda"/></linearGradient><linearGradient id="tdr" x1="0" x2="1"><stop offset="0.75" stop-color="#dddbda"/><stop offset="1" stop-color="#dddbda" stop-opacity="0"/></linearGradient></defs><rect x="600" y="402" width="641" height="2" fill="url(#tdl)"/>
<rect x="1340" y="402" width="660" height="2" fill="url(#tdr)"/>
<rect x="668" y="512.6" width="283.5" height="33" fill="#f0efee"/>
<rect x="523" y="1246" width="1534" height="2" fill="#dddbda"/>

<circle cx="583" cy="1290" r="18.4" fill="#706e6b"/>
<circle cx="577" cy="1285.5" r="2.8" fill="#fff"/><circle cx="589" cy="1285.5" r="2.8" fill="#fff"/>
<path d="M574,1295 Q583,1302 592,1295" fill="none" stroke="#fff" stroke-width="2.6" stroke-linecap="round"/>
<path d="M653,1270 C664,1270 673,1277 673,1286.5 C673,1296 664,1303 653,1303 L650.5,1303 L650.5,1309.5 L644,1303 C637,1300 633,1294 633,1286.5 C633,1277 642,1270 653,1270 Z" fill="#706e6b"/>
<path d="M656,1276 L645.5,1290 L652,1290 L649.5,1300 L661,1286 L654.5,1286 Z" fill="#fff"/>
<rect x="704.5" y="1274.5" width="37" height="31" rx="2.5" fill="#706e6b"/>
<path d="M709,1299.5 L717,1285 L722,1292 L726,1287 L735,1299.5 Z" fill="#fff"/><circle cx="731.5" cy="1282" r="2.8" fill="#fff"/>
<rect x="774" y="1274.3" width="38" height="31.6" rx="2.5" fill="none" stroke="#706e6b" stroke-width="2"/>
<rect x="779" y="1280" width="15" height="11" fill="#706e6b"/>
<rect x="797" y="1280" width="9" height="2" fill="#706e6b"/><rect x="797" y="1285" width="9" height="2" fill="#706e6b"/><rect x="797" y="1289.5" width="9" height="2" fill="#706e6b"/>
<rect x="779" y="1294" width="27" height="2" fill="#706e6b"/><rect x="779" y="1298.5" width="27" height="2" fill="#706e6b"/>
<rect x="856.5" y="1271.3" width="12.6" height="23.5" rx="6.3" fill="#706e6b"/>
<path d="M850.5,1284.5 Q850.5,1300 862.8,1300 Q875,1300 875,1284.5" fill="none" stroke="#706e6b" stroke-width="2.6" stroke-linecap="round"/>
<rect x="861.5" y="1300" width="2.6" height="6" fill="#706e6b"/><rect x="856" y="1305.5" width="13.6" height="3" rx="1.5" fill="#706e6b"/>
<rect x="914.6" y="1280" width="25" height="20.5" rx="1.5" fill="#706e6b"/>
<path d="M938,1287 L950.4,1280 L950.4,1300.5 L938,1293.5 Z" fill="#706e6b"/>
<path d="M985,1274.3 L1021,1274.3 Q1023,1274.3 1023,1276.3 L1023,1285.5 A4.5,4.5 0 0,0 1023,1294.5 L1023,1303.4 Q1023,1305.4 1021,1305.4 L985,1305.4 Q983,1305.4 983,1303.4 L983,1294.5 A4.5,4.5 0 0,0 983,1285.5 L983,1276.3 Q983,1274.3 985,1274.3 Z" fill="#706e6b"/>
<rect x="994.5" y="1277.5" width="2.4" height="4" fill="#fff"/><rect x="994.5" y="1284.5" width="2.4" height="4" fill="#fff"/><rect x="994.5" y="1291.5" width="2.4" height="4" fill="#fff"/><rect x="994.5" y="1298.5" width="2.4" height="4" fill="#fff"/>
<rect x="1058" y="1271" width="30" height="37.6" rx="2" fill="none" stroke="#706e6b" stroke-width="2.2"/>
<rect x="1062" y="1276.5" width="22" height="2.3" fill="#706e6b"/><rect x="1062" y="1281" width="22" height="2.3" fill="#706e6b"/><rect x="1062" y="1285.5" width="15" height="2.3" fill="#706e6b"/>
<rect x="1062" y="1291.5" width="22" height="12" fill="#706e6b"/>
<rect x="1123" y="1272" width="36" height="35.8" rx="4" fill="#706e6b"/>
<path d="M1148.6,1290 A5.9,5.9 0 1,0 1142.3,1284.1 L1142.3,1295.8 A5.9,5.9 0 1,1 1136.4,1289.9" fill="none" stroke="#fff" stroke-width="3.5" stroke-linecap="round"/>
<path d="M1212,1270.8 C1222,1270.8 1230,1278 1230,1288 C1230,1294 1227,1297 1227,1300 L1228,1306 L1211,1309 L1210,1304 L1204,1304 Q1201,1304 1201,1301 L1201,1296 L1196,1294 L1200,1285 C1201,1276 1205,1270.8 1212,1270.8 Z" fill="#706e6b"/>
<circle cx="1215.5" cy="1284.5" r="5.5" fill="#fff"/><rect x="1213.9" y="1276.5" width="3.2" height="4.5" rx="1.0" fill="#fff" transform="rotate(0.0 1215.5 1284.5)"/><rect x="1213.9" y="1276.5" width="3.2" height="4.5" rx="1.0" fill="#fff" transform="rotate(60.0 1215.5 1284.5)"/><rect x="1213.9" y="1276.5" width="3.2" height="4.5" rx="1.0" fill="#fff" transform="rotate(120.0 1215.5 1284.5)"/><rect x="1213.9" y="1276.5" width="3.2" height="4.5" rx="1.0" fill="#fff" transform="rotate(180.0 1215.5 1284.5)"/><rect x="1213.9" y="1276.5" width="3.2" height="4.5" rx="1.0" fill="#fff" transform="rotate(240.0 1215.5 1284.5)"/><rect x="1213.9" y="1276.5" width="3.2" height="4.5" rx="1.0" fill="#fff" transform="rotate(300.0 1215.5 1284.5)"/><circle cx="1215.5" cy="1284.5" r="2.6" fill="#706e6b"/>
<path d="M1280.2,1271.1 L1288.7,1283.6 L1270.7,1294.8 L1263.2,1283.4 Z" fill="#706e6b"/>
<polygon points="1272.4,1281.2 1278.9,1281.2 1275.6,1285" fill="#fff"/>
<rect x="1271.5" y="1285.2" width="32" height="24.3" rx="1.8" fill="#706e6b" stroke="#fff" stroke-width="1.3"/>
<path d="M1277.8,1304 L1283.5,1292 L1288.2,1301.8 L1292.8,1297.5 L1297.1,1304 Z" fill="#fff"/><circle cx="1295" cy="1293.4" r="2.3" fill="#fff"/>

<path d="M2358.5,298.6 L2361,290 L2374.5,276.5 Q2376,275 2377.5,276.5 L2380.5,279.5 Q2382,281 2380.5,282.5 L2367,296 Z" fill="#c9c7c5"/>
<path d="M2661.5,625 L2664,616.5 L2679,601.5 Q2680.5,600 2682,601.5 L2686.5,606 Q2688,607.5 2686.5,609 L2671.5,623.5 Z" fill="#dddbda"/>
<circle cx="2685" cy="260.5" r="3.4" fill="#706e6b"/><circle cx="2685" cy="272" r="3.4" fill="#706e6b"/><circle cx="2685" cy="283.5" r="3.4" fill="#706e6b"/>
<rect x="2091" y="674" width="598" height="2" fill="#dddbda"/>
<rect x="2091" y="844" width="598" height="2" fill="#dddbda"/>
<rect x="2091" y="692" width="48" height="48" rx="5" fill="#7dc37d"/>
<path d="M2116.5,703.5 L2128,703.5 Q2130,703.5 2130,705.5 L2130,716.5 L2116.5,729.5 Q2114.7,731.2 2113,729.5 L2103,719.8 Q2101.3,718 2103,716.3 Z" fill="#fff"/>
<circle cx="2121.5" cy="711.3" r="3.5" fill="#7dc37d"/>
<line x1="2107.5" y1="718.5" x2="2114.5" y2="725.5" stroke="#7dc37d" stroke-width="3.5" stroke-linecap="round"/>
<rect x="2091" y="870.4" width="48" height="47.2" rx="5" fill="#f88962"/>
<circle cx="2115" cy="883.5" r="4.2" fill="#fff"/>
<path d="M2101,889 L2129,889 L2120,896 L2124,907 L2115,900 L2106,907 L2110,896 Z" fill="#fff"/>
<rect x="2721" y="207" width="2" height="1331" fill="#dddbda"/>
<ellipse cx="2775" cy="262.5" rx="9.3" ry="11" fill="#41b453"/>
<path d="M2770,270 L2780,270 L2779,276 Q2792,279 2792,287 Q2792,292.5 2775,292.5 Q2758,292.5 2758,287 Q2758,279 2771,276 Z" fill="#41b453"/>
<circle cx="2776" cy="379" r="19" fill="none" stroke="#b0adab" stroke-width="4.2"/>
<circle cx="2776" cy="379" r="10" fill="none" stroke="#b0adab" stroke-width="4.6"/>
<circle cx="2776" cy="379" r="3.8" fill="#b0adab"/>
<rect x="2757" y="404.4" width="38" height="27.6" rx="13.8" fill="#b3afad"/>
<g transform="translate(2243,323) scale(1.15)">
<path d="M15.5,7.5 A8.5,7.5 0 1,0 3.5,14.5 L2.5,17.5 L8,15.8 L11,15.8" fill="none" stroke="#3e3e3c" stroke-width="1.8"/>
<circle cx="6.5" cy="6.5" r="1.4" fill="#3e3e3c"/><circle cx="12.2" cy="6.5" r="1.4" fill="#3e3e3c"/>
<circle cx="16.8" cy="12" r="2.6" fill="none" stroke="#3e3e3c" stroke-width="1.7"/>
<path d="M13,17.6 Q13,14.8 16.8,14.8 Q20.6,14.8 20.6,17.6 Z" fill="none" stroke="#3e3e3c" stroke-width="1.7"/>
</g></svg>
<div class="t" style="left:194.7px;top:245.3px;font-size:25px;color:#080707;letter-spacing:0.51px;">Online</div><div class="t" style="left:25.0px;top:336.0px;font-size:26px;color:#080707;font-weight:700;letter-spacing:1.11px;">2/10 Chatting</div><div class="t" style="left:262.0px;top:337.7px;font-size:24px;color:#ffffff;">0</div><div class="t" style="left:289.7px;top:336.0px;font-size:26px;color:#3e3e3c;letter-spacing:1.05px;">Waiting</div><div class="t" style="left:132.7px;top:432.8px;font-size:25px;color:#080707;font-weight:700;letter-spacing:-0.76px;">Emma Li</div><div class="t" style="left:408.0px;top:428.5px;font-size:26px;color:#3e3e3c;letter-spacing:-0.22px;">15mins</div><div class="t" style="left:131.7px;top:481.6px;font-size:26.5px;color:#080707;letter-spacing:0.43px;">Hi I&#x27;d like to talk to ...</div><div class="t" style="left:132.7px;top:592.8px;font-size:25px;color:#080707;font-weight:700;letter-spacing:-2.08px;">Lucy</div><div class="t" style="left:408.0px;top:588.5px;font-size:26px;color:#3e3e3c;letter-spacing:-0.22px;">15mins</div><div class="t" style="left:132.7px;top:642.1px;font-size:26.5px;color:#080707;">hi</div><div class="t" style="left:630.0px;top:225.4px;font-size:27px;color:#080707;letter-spacing:-0.19px;">Emma Li</div><div class="t" style="left:658.5px;top:266.2px;font-size:21px;color:#3e3e3c;letter-spacing:-0.20px;">Charket</div><div class="t" style="left:1816.6px;top:244.1px;font-size:27px;color:#ffffff;letter-spacing:-0.06px;">Mark as Done</div><div class="t" style="left:1254.0px;top:387.7px;font-size:27px;color:#080707;font-weight:700;letter-spacing:-1.37px;">Today</div><div class="t" style="left:667.0px;top:473.7px;font-size:24px;color:#080707;font-weight:700;letter-spacing:-0.09px;">Emma Li</div><div class="t" style="left:788.5px;top:473.7px;font-size:24px;color:#3e3e3c;font-weight:700;letter-spacing:0.90px;">11:49 PM</div><div class="t" style="left:666.8px;top:514.9px;font-size:27px;color:#3cb371;letter-spacing:-0.27px;">[Scan Charket QRCode]</div><div class="t" style="left:668.0px;top:583.1px;font-size:24px;color:#080707;font-weight:700;letter-spacing:-0.05px;">Charket Bot</div><div class="t" style="left:825.6px;top:583.1px;font-size:24px;color:#3e3e3c;font-weight:700;letter-spacing:0.90px;">11:49 PM</div><div class="t" style="left:666.0px;top:625.4px;font-size:26.5px;color:#080707;">Hi</div><div class="t" style="left:667.0px;top:803.7px;font-size:24px;color:#080707;font-weight:700;letter-spacing:-0.09px;">Emma Li</div><div class="t" style="left:788.0px;top:803.7px;font-size:24px;color:#3e3e3c;font-weight:700;letter-spacing:0.47px;">11:51 PM</div><div class="t" style="left:666.0px;top:844.9px;font-size:26.5px;color:#080707;">Hi I&#x27;d like to talk to Lucy</div><div class="t" style="left:563.0px;top:1338.4px;font-size:25.5px;color:#a8a8a8;letter-spacing:0.69px;">Alt or Shift + Enter to add a new line. Start with &#x27;#&#x27; to select a Quick Reply</div><div class="t" style="left:1937.0px;top:1511.1px;font-size:24px;color:#3e3e3c;letter-spacing:3.33px;">0/2000</div><div class="t" style="left:2242.4px;top:273.6px;font-size:26.5px;color:#006dcc;letter-spacing:0.16px;">Emma Li</div><div class="t" style="left:2283.0px;top:320.4px;font-size:26px;color:#080707;letter-spacing:0.20px;">Charket</div><div class="t" style="left:2091.0px;top:407.5px;font-size:26px;color:#3e3e3c;letter-spacing:0.88px;">Gender:</div><div class="t" style="left:2359.0px;top:407.5px;font-size:26px;color:#080707;letter-spacing:0.35px;">Female</div><div class="t" style="left:2092.0px;top:456.0px;font-size:26px;color:#3e3e3c;letter-spacing:0.16px;">Address:</div><div class="t" style="left:2360.0px;top:456.0px;font-size:26px;color:#080707;letter-spacing:0.13px;">China</div><div class="t" style="left:2091.0px;top:504.4px;font-size:26px;color:#3e3e3c;letter-spacing:0.62px;">Subscription Date:</div><div class="t" style="left:2360.0px;top:504.4px;font-size:26px;color:#080707;letter-spacing:1.73px;">10/18/2020 7:29 PM</div><div class="t" style="left:2090.0px;top:552.0px;font-size:26px;color:#3e3e3c;letter-spacing:0.51px;">Last Activity Time:</div><div class="t" style="left:2360.0px;top:552.0px;font-size:26px;color:#080707;letter-spacing:1.83px;">10/26/2020 11:51 PM</div><div class="t" style="left:2090.0px;top:600.5px;font-size:26px;color:#3e3e3c;letter-spacing:0.47px;">Related To:</div><div class="t" style="left:2359.0px;top:600.5px;font-size:26px;color:#006dcc;letter-spacing:0.53px;">Emma Li</div><div class="t" style="left:2163.5px;top:703.7px;font-size:27px;color:#080707;font-weight:700;letter-spacing:-1.90px;">Tags</div><div class="t" style="left:2639.6px;top:702.0px;font-size:26px;color:#006dcc;letter-spacing:0.27px;">Edit</div><div class="t" style="left:2345.0px;top:778.3px;font-size:25px;color:#3e3e3c;letter-spacing:-0.44px;">No Tags</div><div class="t" style="left:2163.3px;top:879.1px;font-size:27px;color:#080707;font-weight:700;letter-spacing:-1.07px;">Lead</div><div class="t" style="left:2090.0px;top:955.7px;font-size:26px;color:#3e3e3c;letter-spacing:0.73px;">Lead Name:</div><div class="t" style="left:2359.0px;top:955.7px;font-size:26px;color:#006dcc;letter-spacing:0.50px;">Emma Li</div><div class="t" style="left:2091.0px;top:1003.4px;font-size:26px;color:#3e3e3c;letter-spacing:0.78px;">Company:</div><div class="t" style="left:2359.0px;top:1003.4px;font-size:26px;color:#080707;letter-spacing:0.35px;">From WeChat</div><div class="t" style="left:2090.0px;top:1051.8px;font-size:26px;color:#3e3e3c;letter-spacing:0.86px;">Email:</div><div class="t" style="left:2090.0px;top:1099.8px;font-size:26px;color:#3e3e3c;letter-spacing:1.16px;">Phone:</div><div class="t" style="left:2090.0px;top:1147.5px;font-size:26px;color:#3e3e3c;letter-spacing:1.68px;">Mobile:</div><div class="t" style="left:2770.0px;top:407.7px;font-size:24px;color:#ffffff;">0</div>

<div class="abs" style="left:0;top:182px;width:2843px;height:1356px;background:rgba(8,7,7,.6)"></div>

<div class="abs" style="left:883px;top:561.5px;width:1066px;height:610.5px;background:#fff;border-radius:8px;overflow:hidden">
  <div class="abs" style="left:0;top:114.5px;width:1066px;height:4px;background:#dddbda"></div>
  <div class="abs" style="left:0;top:494.5px;width:1066px;height:116px;background:#f3f2f2;border-top:2px solid #dddbda"></div>
</div>
<div class="abs" style="left:915px;top:760.5px;width:1001px;height:62.5px;border:2.5px solid #1589ee;border-radius:8px;box-shadow:0 0 5px #0070d2;background:#fff"></div>
<div class="abs" style="left:941px;top:776px;width:2.2px;height:34px;background:#080707"></div>
<div class="abs" style="left:1400px;top:903px;width:516px;height:109px;border:2px solid #dddbda;border-radius:8px;background:#fff"></div>
<div class="abs" style="left:1580px;top:1084px;width:148px;height:63px;border:2px solid #dddbda;border-radius:8px;background:#fff"></div>
<div class="abs" style="left:1751px;top:1084px;width:166px;height:64px;border-radius:8px;background:#c9c7c5"></div>
<div class="abs" style="left:916px;top:828px;width:996.5px;height:303px;border:2px solid #dddbda;border-radius:8px;background:#fff;box-shadow:0 2px 3px rgba(0,0,0,.16)"></div>
<svg class="full" viewBox="0 0 2843 1538">
<line x1="1918.5" y1="499.5" x2="1947.5" y2="528.5" stroke="#fff" stroke-width="5"/>
<line x1="1947.5" y1="499.5" x2="1918.5" y2="528.5" stroke="#fff" stroke-width="5"/>
<circle cx="1035" cy="906" r="10" fill="#1bb482"/>
<circle cx="1035" cy="995.8" r="8.3" fill="none" stroke="#a9b5c4" stroke-width="3.4"/>
<circle cx="1035" cy="1085.5" r="8.3" fill="none" stroke="#a9b5c4" stroke-width="3.4"/>

<defs><linearGradient id="lbg" x1="0" y1="0" x2="1" y2="1"><stop offset="0" stop-color="#22a6f5"/><stop offset="1" stop-color="#0a55e6"/></linearGradient>
<linearGradient id="lfc" x1="0" y1="0" x2="0" y2="1"><stop offset="0" stop-color="#fde0c0"/><stop offset="1" stop-color="#f5b583"/></linearGradient></defs>
<path d="M963.5,899 L961.5,881 Q961,865.5 976,864.3 Q990.5,865.5 990.2,881 L990.8,900 Q984,894 976,893 Q968,894 963.5,899 Z" fill="#bf5426"/>
<ellipse cx="977" cy="880.5" rx="9.8" ry="9.6" fill="url(#lfc)"/>
<path d="M965,882 Q965.5,867 978.5,866.5 Q987,867.5 987.5,874 Q979,869 967,883 Z" fill="#c25a2a"/>
<path d="M971,888.5 L981.5,888.5 L981.5,899 L976,906 L971,899 Z" fill="#f4b98e"/>
<path d="M960.3,902 L971,891.5 L975.8,906.3 Z M991.3,902 L981.5,891.5 L975.8,906.3 Z" fill="#fbfbfb"/>
<path d="M957.5,905 Q959.5,899.5 965,901 L975.8,906.5 L986.5,901 Q992,899.5 994.5,905 Q996,910.8 976,910.8 Q956,910.8 957.5,905 Z" fill="url(#lbg)"/>
<path d="M963.5,881 Q964,890 971.5,892.5 L977,892" fill="none" stroke="#333" stroke-width="1.7"/>
<circle cx="977.3" cy="891.8" r="1.8" fill="#333"/>
<ellipse cx="963" cy="877.5" rx="2.4" ry="3.6" fill="#6e6e6e"/>

<rect x="949" y="950" width="60" height="60" rx="4" fill="#d2dbf2"/>
<clipPath id="xuc"><rect x="949" y="950" width="60" height="60" rx="4"/></clipPath>
<g clip-path="url(#xuc)">
<path d="M950,1010 L952,1004 Q955,997 966,996 L992,996 Q1003,997 1006,1004 L1008,1010 Z" fill="#80c6ea"/>
<path d="M950,1010 L952,1004 Q953.5,1001 956,999.5 L960,1010 Z M1008,1010 L1006,1004 Q1004.5,1001 1002,999.5 L998,1010 Z" fill="#2f7fa2"/>
<path d="M972,994 L979,1001 L986,994 L990,996 L986,1004 L979,1001 L972,1004 L968,996 Z" fill="#3b9dcd"/>
<rect x="977.4" y="1002" width="3.4" height="9" fill="#3b4656"/>
<path d="M972,990 L986,990 L986,996 L979,1001 L972,996 Z" fill="#d99a68"/>
<path d="M966.5,973 Q966.5,965 979,965 Q992,965 992,973 L992,986 Q992,995.5 979,995.5 Q966.5,995.5 966.5,986 Z" fill="#e9b47e"/>
<path d="M966.5,973 Q966.5,965 973,965.5 Q970,975 971,995 Q966.5,993 966.5,986 Z" fill="#dda06c"/>
<path d="M962.5,974 Q961,958 970,954 Q979,951 988,954 Q997,957 996,972 L993,974 Q992,965 985,964 Q975,962 967,966 Q966,970 966,974 Z" fill="#6e4a42"/>
<rect x="961.8" y="974" width="4.6" height="9.5" rx="2.3" fill="#5c6680"/><rect x="991.8" y="974" width="4.6" height="9.5" rx="2.3" fill="#5c6680"/>
<path d="M994.5,983 Q993,988.5 982,989" fill="none" stroke="#3b4656" stroke-width="1.6"/>
<circle cx="982" cy="989" r="1.3" fill="#3b4656"/>
</g>

<rect x="949" y="1040" width="60" height="60" fill="#fbfbfb"/><rect x="949" y="1040" width="6" height="6" fill="#ececec"/><rect x="961" y="1040" width="6" height="6" fill="#ececec"/><rect x="973" y="1040" width="6" height="6" fill="#ececec"/><rect x="985" y="1040" width="6" height="6" fill="#ececec"/><rect x="997" y="1040" width="6" height="6" fill="#ececec"/><rect x="955" y="1046" width="6" height="6" fill="#ececec"/><rect x="967" y="1046" width="6" height="6" fill="#ececec"/><rect x="979" y="1046" width="6" height="6" fill="#ececec"/><rect x="991" y="1046" width="6" height="6" fill="#ececec"/><rect x="1003" y="1046" width="6" height="6" fill="#ececec"/><rect x="949" y="1052" width="6" height="6" fill="#ececec"/><rect x="961" y="1052" width="6" height="6" fill="#ececec"/><rect x="973" y="1052" width="6" height="6" fill="#ececec"/><rect x="985" y="1052" width="6" height="6" fill="#ececec"/><rect x="997" y="1052" width="6" height="6" fill="#ececec"/><rect x="955" y="1058" width="6" height="6" fill="#ececec"/><rect x="967" y="1058" width="6" height="6" fill="#ececec"/><rect x="979" y="1058" width="6" height="6" fill="#ececec"/><rect x="991" y="1058" width="6" height="6" fill="#ececec"/><rect x="1003" y="1058" width="6" height="6" fill="#ececec"/><rect x="949" y="1064" width="6" height="6" fill="#ececec"/><rect x="961" y="1064" width="6" height="6" fill="#ececec"/><rect x="973" y="1064" width="6" height="6" fill="#ececec"/><rect x="985" y="1064" width="6" height="6" fill="#ececec"/><rect x="997" y="1064" width="6" height="6" fill="#ececec"/><rect x="955" y="1070" width="6" height="6" fill="#ececec"/><rect x="967" y="1070" width="6" height="6" fill="#ececec"/><rect x="979" y="1070" width="6" height="6" fill="#ececec"/><rect x="991" y="1070" width="6" height="6" fill="#ececec"/><rect x="1003" y="1070" width="6" height="6" fill="#ececec"/><rect x="949" y="1076" width="6" height="6" fill="#ececec"/><rect x="961" y="1076" width="6" height="6" fill="#ececec"/><rect x="973" y="1076" width="6" height="6" fill="#ececec"/><rect x="985" y="1076" width="6" height="6" fill="#ececec"/><rect x="997" y="1076" width="6" height="6" fill="#ececec"/><rect x="955" y="1082" width="6" height="6" fill="#ececec"/><rect x="967" y="1082" width="6" height="6" fill="#ececec"/><rect x="979" y="1082" width="6" height="6" fill="#ececec"/><rect x="991" y="1082" width="6" height="6" fill="#ececec"/><rect x="1003" y="1082" width="6" height="6" fill="#ececec"/><rect x="949" y="1088" width="6" height="6" fill="#ececec"/><rect x="961" y="1088" width="6" height="6" fill="#ececec"/><rect x="973" y="1088" width="6" height="6" fill="#ececec"/><rect x="985" y="1088" width="6" height="6" fill="#ececec"/><rect x="997" y="1088" width="6" height="6" fill="#ececec"/><rect x="955" y="1094" width="6" height="6" fill="#ececec"/><rect x="967" y="1094" width="6" height="6" fill="#ececec"/><rect x="979" y="1094" width="6" height="6" fill="#ececec"/><rect x="991" y="1094" width="6" height="6" fill="#ececec"/><rect x="1003" y="1094" width="6" height="6" fill="#ececec"/>
<path d="M963.5,1095.5 Q964,1086 970,1084 L988,1084 Q994,1086 994.5,1095.5 Z" fill="#dfe9f5"/>
<path d="M967,1095.5 L967.5,1086 Q969,1083.5 973,1083 L979,1092 L985,1083 Q989,1083.5 990.5,1086 L991,1095.5 Z" fill="#2d4b6d"/>
<path d="M973.5,1083 L979,1092 L984.5,1083 Z" fill="#fff"/>
<path d="M975,1085 L979,1087 L983,1085 L983,1089 L979,1087 L975,1089 Z" fill="#2d4b6d"/>
<rect x="975.4" y="1076" width="7.5" height="8" fill="#f0c39e"/>
<ellipse cx="979" cy="1064.5" rx="10" ry="12.5" fill="#fcd9b8"/>
<path d="M979,1064 L989,1064 Q989,1077 979,1077 Z" fill="#f6cfaa"/>
<path d="M968,1063 Q966.5,1046 979,1045 Q991.5,1046 990,1063 Q987,1053 979,1053.5 Q975,1054 972,1056 Q969,1058 968,1063 Z" fill="#454545"/>
<path d="M965.5,1064 Q964,1043.5 979,1043.5 Q994,1043.5 992.5,1064" fill="none" stroke="#555" stroke-width="1.4"/>
<ellipse cx="965.7" cy="1064.5" rx="3" ry="5" fill="#3a3a3a"/><ellipse cx="992.3" cy="1064.5" rx="3" ry="5" fill="#3a3a3a"/>
<path d="M992,1068 Q990,1073 982,1073.5" fill="none" stroke="#3a3a3a" stroke-width="1.5"/>
<ellipse cx="981.7" cy="1073.5" rx="2" ry="1.6" fill="#3a3a3a"/>
</svg>
<div class="t" style="left:1297.0px;top:597.7px;font-size:41px;color:#080707;letter-spacing:-1.23px;">Transfer Chat</div><div class="t" style="left:914.0px;top:725.7px;font-size:24px;color:#3e3e3c;letter-spacing:0.44px;">Agent</div><div class="t" style="left:1022.7px;top:857.8px;font-size:25px;color:#080707;letter-spacing:-0.58px;">Lucy Bao</div><div class="t" style="left:1051.6px;top:893.1px;font-size:25px;color:#3e3e3c;letter-spacing:0.61px;">Online</div><div class="t" style="left:1804.0px;top:876.3px;font-size:25px;color:#080707;letter-spacing:0.97px;">0 chat</div><div class="t" style="left:1024.7px;top:946.8px;font-size:25px;color:#080707;letter-spacing:-0.54px;">Xu Stefan</div><div class="t" style="left:1051.6px;top:982.8px;font-size:25px;color:#3e3e3c;letter-spacing:0.75px;">Offline</div><div class="t" style="left:1803.0px;top:966.6px;font-size:25px;color:#080707;letter-spacing:1.17px;">1 chat</div><div class="t" style="left:1023.7px;top:1036.5px;font-size:25px;color:#080707;letter-spacing:-0.27px;">Grace Niu</div><div class="t" style="left:1051.6px;top:1072.6px;font-size:25px;color:#3e3e3c;letter-spacing:0.75px;">Offline</div><div class="t" style="left:1803.0px;top:1056.5px;font-size:25px;color:#080707;letter-spacing:1.17px;">1 chat</div>
</body></html>
